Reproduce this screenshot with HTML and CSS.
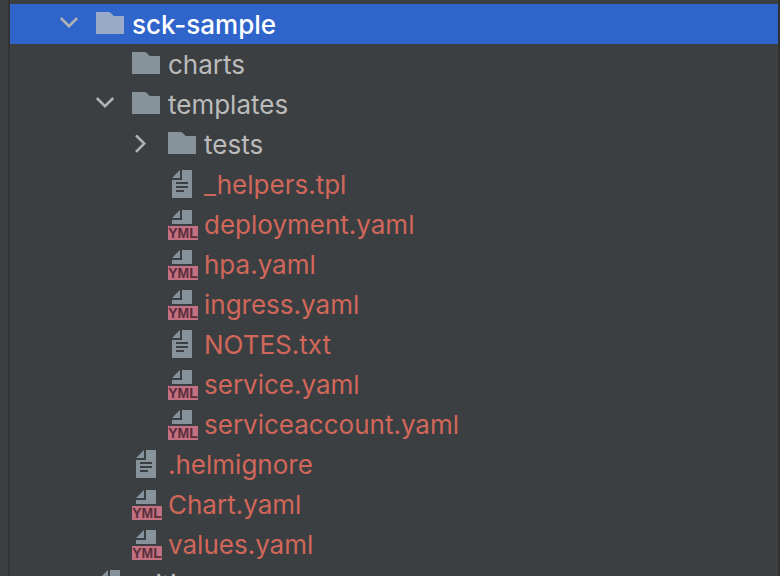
FILE: index.html
```
<!DOCTYPE html>
<html lang="en">
  <head>
    <meta charset="UTF-8" />
    <meta name="viewport" content="width=device-width, initial-scale=1.0" />
    <title>Project</title>
    <link rel="stylesheet" href="styles.css">
  </head>
  <body>
    <svg class="sprite" aria-hidden="true">
      <symbol id="folder" viewBox="0 0 16 16">
        <path d="M1 13h14V4H9.9L8.5 2.6Q7.9 2 7 2H1z" fill="currentColor" />
      </symbol>
      <symbol id="file" viewBox="0 0 16 16">
        <path d="M7 1 3 5h4z" fill="currentColor" />
        <path d="M8 1v5H3v9h10V1z" fill="currentColor" />
        <path d="M5 7h6v1H5zM5 9h6v1H5zM5 11h4v1H5z" fill="#3c3f41" />
      </symbol>
      <symbol id="yml" viewBox="0 0 16 16">
        <path d="M7 1 3 5h4z" fill="currentColor" />
        <path d="M8 1v5H3v2h10V1z" fill="currentColor" />
        <path d="M1 9h15v7H1z" fill="#c27082" />
        <text class="badge" x="8.5" y="15" text-anchor="middle">YML</text>
      </symbol>
      <symbol id="open" viewBox="0 0 16 16">
        <path d="M4.4 5l4.1 4.1L12.6 5" fill="none" stroke="#afb1b3" stroke-width="1.3" />
      </symbol>
      <symbol id="closed" viewBox="0 0 16 16">
        <path d="M6 3.7l4.1 4.1L6 11.9" fill="none" stroke="#afb1b3" stroke-width="1.3" />
      </symbol>
    </svg>
    <div class="panel">
      <ul class="tree">
        <li class="row level-1 selected"><svg class="arrow"><use href="#open" /></svg><svg class="icon"><use href="#folder" /></svg><span>sck-sample</span></li>
        <li class="row level-2"><svg class="arrow"></svg><svg class="icon"><use href="#folder" /></svg><span>charts</span></li>
        <li class="row level-2"><svg class="arrow"><use href="#open" /></svg><svg class="icon"><use href="#folder" /></svg><span>templates</span></li>
        <li class="row level-3"><svg class="arrow"><use href="#closed" /></svg><svg class="icon"><use href="#folder" /></svg><span>tests</span></li>
        <li class="row level-3 untracked"><svg class="arrow"></svg><svg class="icon"><use href="#file" /></svg><span>_helpers.tpl</span></li>
        <li class="row level-3 untracked"><svg class="arrow"></svg><svg class="icon"><use href="#yml" /></svg><span>deployment.yaml</span></li>
        <li class="row level-3 untracked"><svg class="arrow"></svg><svg class="icon"><use href="#yml" /></svg><span>hpa.yaml</span></li>
        <li class="row level-3 untracked"><svg class="arrow"></svg><svg class="icon"><use href="#yml" /></svg><span>ingress.yaml</span></li>
        <li class="row level-3 untracked"><svg class="arrow"></svg><svg class="icon"><use href="#file" /></svg><span>NOTES.txt</span></li>
        <li class="row level-3 untracked"><svg class="arrow"></svg><svg class="icon"><use href="#yml" /></svg><span>service.yaml</span></li>
        <li class="row level-3 untracked"><svg class="arrow"></svg><svg class="icon"><use href="#yml" /></svg><span>serviceaccount.yaml</span></li>
        <li class="row level-2 untracked"><svg class="arrow"></svg><svg class="icon"><use href="#file" /></svg><span>.helmignore</span></li>
        <li class="row level-2 untracked"><svg class="arrow"></svg><svg class="icon"><use href="#yml" /></svg><span>Chart.yaml</span></li>
        <li class="row level-2 untracked"><svg class="arrow"></svg><svg class="icon"><use href="#yml" /></svg><span>values.yaml</span></li>
        <li class="row level-1"><svg class="arrow"></svg><svg class="icon"><use href="#file" /></svg><span>.gitignore</span></li>
      </ul>
    </div>
  </body>
</html>
```
FILE: styles.css
```
body {
  margin: 0;
  height: 100vh;
  overflow: hidden;
  background-color: #3c3f41;
  font-family: Inter, 'Liberation Sans', sans-serif;
  font-size: 26px;
  color: #bbbbbb;
}
.sprite {
  display: none;
}
.panel {
  min-height: 100vh;
  margin-left: 8px;
  border-left: 2px solid #323232;
  border-right: 2px solid #2f3133;
}
.tree {
  list-style: none;
  margin: 0;
  padding: 4px 0 0;
}
.row {
  display: flex;
  align-items: center;
  height: 40px;
  line-height: 36px;
  white-space: nowrap;
}
.row span {
  padding-top: 2px;
}
.level-1 {
  padding-left: 42px;
}
.level-2 {
  padding-left: 78px;
}
.level-3 {
  padding-left: 114px;
}
.selected {
  background-color: #2f65ca;
  color: #ffffff;
  font-weight: 500;
}
.untracked {
  color: #d1675a;
}
.arrow,
.icon {
  flex: none;
  width: 32px;
  height: 32px;
}
.icon {
  margin: 0 6px 0 10px;
  color: #87939a;
}
.selected .icon {
  color: #9aabc8;
}
.badge {
  font-family: 'Liberation Sans', Arial, sans-serif;
  font-size: 7px;
  font-weight: bold;
  fill: #5a2f3c;
}
```
